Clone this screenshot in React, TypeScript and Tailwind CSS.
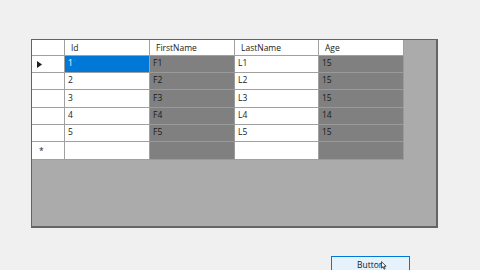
const columns = [
  { key: "id", label: "Id", dark: false },
  { key: "first", label: "FirstName", dark: true },
  { key: "last", label: "LastName", dark: false },
  { key: "age", label: "Age", dark: true },
];

const rows = [
  { id: "1", first: "F1", last: "L1", age: "15", h: "h-[17px]" },
  { id: "2", first: "F2", last: "L2", age: "15", h: "h-[17px]" },
  { id: "3", first: "F3", last: "L3", age: "15", h: "h-[18px]" },
  { id: "4", first: "F4", last: "L4", age: "14", h: "h-[17px]" },
  { id: "5", first: "F5", last: "L5", age: "15", h: "h-[17px]" },
];

const widths = ["w-[85px]", "w-[85px]", "w-[84px]", "w-[85px]"];

export default function App() {
  return (
    <div
      className="w-[480px] h-[270px] bg-[#f0f0f0] overflow-hidden text-[8.5px] text-[#1a1a1a]"
      style={{ fontFamily: '"Open Sans", "Noto Sans", sans-serif' }}
    >
      <div className="pt-[39px] pl-[31px]">
        <div className="w-[407px] h-[189px] border border-[#646464] border-r-2 border-b-2 bg-[#ababab]">
          {/* header */}
          <div className="flex h-[16px]">
            <div className="w-[33px] bg-white border-r border-b border-[#a0a0a0]" />
            {columns.map((c, i) => (
              <div
                key={c.key}
                className={`${widths[i]} bg-white border-r border-b border-[#a0a0a0] pl-[6px] leading-[15px]`}
              >
                {c.label}
              </div>
            ))}
          </div>
          {rows.map((r, ri) => (
            <div key={r.id} className={`flex ${r.h}`}>
              <div className="w-[33px] bg-white border-r border-b border-[#a0a0a0] flex items-center pl-[5px]">
                {ri === 0 && (
                  <svg width="5" height="7" viewBox="0 0 5 7">
                    <path d="M0 0 L5 3.5 L0 7 Z" fill="#1e1e1e" />
                  </svg>
                )}
              </div>
              {columns.map((c, i) => {
                const selected = ri === 0 && i === 0;
                const bg = selected ? "bg-[#0078d7] text-white" : c.dark ? "bg-[#808080]" : "bg-white";
                const line = c.dark ? "border-[#9a9a9a]" : "border-[#a0a0a0]";
                return (
                  <div
                    key={c.key}
                    className={`${widths[i]} ${bg} border-r border-b ${line} pl-[3px] flex items-center pb-[1px]`}
                  >
                    {r[c.key as keyof typeof r]}
                  </div>
                );
              })}
            </div>
          ))}
          {/* new row */}
          <div className="flex h-[18px]">
            <div className="w-[33px] bg-white border-r border-b border-[#a0a0a0] pl-[7px] leading-[18px]">
              *
            </div>
            {columns.map((c, i) => (
              <div
                key={c.key}
                className={`${widths[i]} ${c.dark ? "bg-[#808080] border-[#9a9a9a]" : "bg-white border-[#a0a0a0]"} border-r border-b`}
              />
            ))}
          </div>
        </div>
      </div>
      <div className="pl-[331px] pt-[28px]">
        <div className="relative w-[79px] h-[20px] bg-[#e5f1fb] border border-[#0078d7] flex justify-center pt-[2px] leading-[12px]">
          Button
          <svg className="absolute left-[49px] top-[4px]" width="6" height="9" viewBox="0 0 7 10">
            <path d="M0.5 0.5 L0.5 8 L2.3 6.3 L3.6 9.3 L4.8 8.8 L3.6 5.9 L6 5.9 Z" fill="#fff" stroke="#000" strokeWidth="0.8" />
          </svg>
        </div>
      </div>
    </div>
  );
}
